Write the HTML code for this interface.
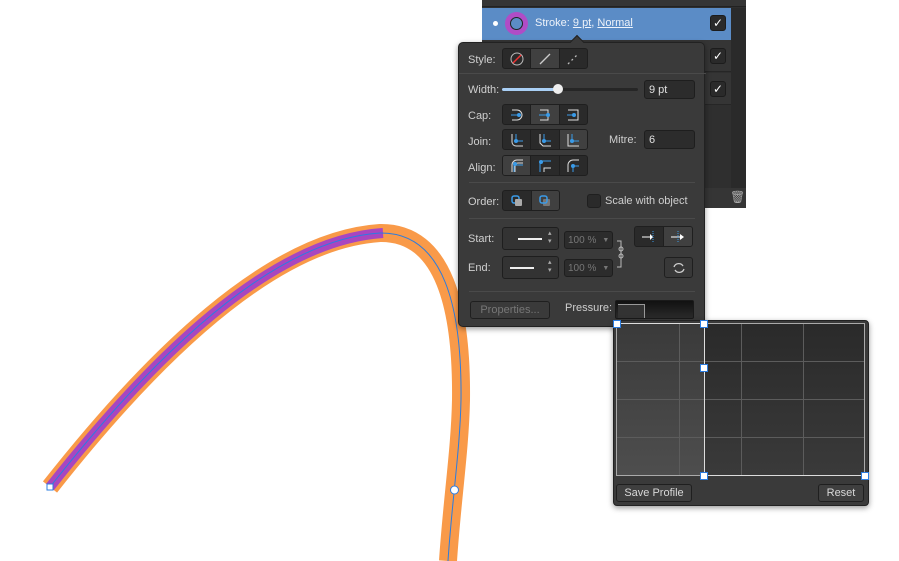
<!DOCTYPE html>
<html><head><meta charset="utf-8"><style>
*{box-sizing:border-box;margin:0;padding:0}
body{width:899px;height:561px;background:#fff;position:relative;overflow:hidden;font-family:"Liberation Sans",sans-serif;font-size:11px;color:#d8d8d8}
.abs{position:absolute}
.lbl{position:absolute;color:#cfcfcf;font-size:11px;white-space:nowrap}
.seg{position:absolute;border:1px solid #1f1f1f;border-radius:3px;background:#2a2a2a;display:flex;overflow:hidden}
.seg div{flex:1;border-right:1px solid #1f1f1f;display:flex;align-items:center;justify-content:center}
.seg div:last-child{border-right:none}
.seg .on{background:#404040}
.fld{position:absolute;background:#2c2c2c;border:1px solid #1e1e1e;border-radius:3px;color:#e0e0e0;font-size:11px;padding:0 4px;display:flex;align-items:center;white-space:nowrap}
.sep{position:absolute;left:10px;width:226px;height:1px;background:#222;border-bottom:1px solid #4a4a4a}
.btn{position:absolute;border:1px solid #1f1f1f;border-radius:3px;background:#3f3f3f;color:#d8d8d8;font-size:11px;text-align:center;white-space:nowrap}
.h{position:absolute;width:8px;height:8px;background:#fff;border:1px solid #2b7ce0}
</style></head><body>

<svg class="abs" style="left:0;top:0" width="899" height="561">
<path d="M50,487 C150,360 270,240 380,233 C445,232 462,310 461,400 C460,450 452,500 448,561" fill="none" stroke="#f99a49" stroke-width="18"/>
<path d="M50,487 C150,360 270,240 383,233" fill="none" stroke="#a846c0" stroke-width="10"/>
<path d="M50,487 C150,360 270,240 380,233 C445,232 462,310 461,400 C460,450 452,500 448,561" fill="none" stroke="#2b7ce0" stroke-width="1"/>
<rect x="47" y="484" width="6" height="6" fill="#fff" stroke="#2b7ce0"/>
<circle cx="454.5" cy="490" r="4" fill="#fff" stroke="#2b7ce0"/>
</svg>

<div class="abs" style="left:482px;top:0;width:264px;height:208px;background:#2f2f2f"></div>
<div class="abs" style="left:482px;top:0;width:264px;height:7px;background:#353535;border-bottom:1px solid #222"></div>
<div class="abs" style="left:482px;top:8px;width:249px;height:32px;background:#5b8cc6"></div>
<div class="abs" style="left:493px;top:21px;width:5px;height:5px;border-radius:50%;background:#fff"></div>
<div class="abs" style="left:505px;top:12px;width:23px;height:23px;border-radius:50%;border:5px solid #b04cc6;background:#5b8cc6"><div style="width:13px;height:13px;border-radius:50%;border:1px solid #222"></div></div>
<div class="abs" style="left:535px;top:17px;color:#eef3fa;font-size:11px">Stroke: <u>9 pt</u>, <u>Normal</u></div>
<div class="abs" style="left:482px;top:40px;width:264px;height:32px;background:#353535;border-bottom:1px solid #262626"></div>
<div class="abs" style="left:482px;top:73px;width:264px;height:32px;background:#353535;border-bottom:1px solid #262626"></div>
<div class="abs" style="left:731px;top:8px;width:15px;height:200px;background:#2a2a2a"></div>
<div class="abs" style="left:710px;top:15px;width:16px;height:16px;border-radius:3px;background:#2a2a2a;border:1px solid #1c1c1c;color:#fff;font-size:12px;text-align:center;line-height:14px">✓</div>
<div class="abs" style="left:710px;top:48px;width:16px;height:16px;border-radius:3px;background:#2a2a2a;border:1px solid #1c1c1c;color:#fff;font-size:12px;text-align:center;line-height:14px">✓</div>
<div class="abs" style="left:710px;top:81px;width:16px;height:16px;border-radius:3px;background:#2a2a2a;border:1px solid #1c1c1c;color:#fff;font-size:12px;text-align:center;line-height:14px">✓</div>
<div class="abs" style="left:705px;top:188px;width:41px;height:20px;background:#353535"></div>
<div class="abs" style="left:730px;top:190px;color:#aaa;font-size:12px">🗑</div>

<div class="abs" style="left:458px;top:42px;width:247px;height:285px;background:#3a3a3a;border:1px solid #222;border-radius:5px;box-shadow:0 2px 6px rgba(0,0,0,.4)">
<div class="abs" style="left:113px;top:-6px;width:10px;height:10px;background:#3a3a3a;transform:rotate(45deg);border-left:1px solid #222;border-top:1px solid #222"></div>
<div class="lbl" style="left:9px;top:11px">Style:</div>
<div class="seg" style="left:43px;top:5px;width:86px;height:21px">
<div><svg width="14" height="14"><circle cx="7" cy="7" r="6" fill="none" stroke="#bbb"/><line x1="3" y1="11" x2="11" y2="3" stroke="#e33" stroke-width="1.5"/></svg></div>
<div class="on"><svg width="14" height="14"><line x1="2" y1="12" x2="12" y2="2" stroke="#ccc" stroke-width="1.3"/></svg></div>
<div><svg width="14" height="14"><line x1="2" y1="12" x2="12" y2="2" stroke="#bbb" stroke-width="1.3" stroke-dasharray="2 3"/></svg></div>
</div>
<div class="sep" style="top:30px;left:0;width:247px"></div>
<div class="lbl" style="left:9px;top:41px">Width:</div>
<div class="abs" style="left:43px;top:45px;width:136px;height:3px;background:#262626;border-radius:2px"></div>
<div class="abs" style="left:43px;top:45px;width:56px;height:3px;background:#a9cff5;border-radius:2px"></div>
<div class="abs" style="left:94px;top:41px;width:10px;height:10px;border-radius:50%;background:#eee"></div>
<div class="fld" style="left:185px;top:37px;width:51px;height:19px">9 pt</div>
<div class="lbl" style="left:9px;top:67px">Cap:</div>
<div class="seg" style="left:43px;top:61px;width:86px;height:21px">
<div><svg width="14" height="12"><path d="M2,1H7A5,5 0 0 1 7,11H2" fill="none" stroke="#ddd"/><line x1="1" y1="6" x2="9" y2="6" stroke="#3a9be8"/><circle cx="9" cy="6" r="2" fill="#3a9be8"/></svg></div>
<div class="on"><svg width="14" height="12"><path d="M2,1H10V11H2" fill="none" stroke="#ddd"/><line x1="1" y1="6" x2="10" y2="6" stroke="#3a9be8"/><circle cx="10" cy="6" r="2" fill="#3a9be8"/></svg></div>
<div><svg width="14" height="12"><path d="M2,1H12V11H2" fill="none" stroke="#ddd"/><line x1="1" y1="6" x2="8" y2="6" stroke="#3a9be8"/><circle cx="8" cy="6" r="2" fill="#3a9be8"/></svg></div>
</div>
<div class="lbl" style="left:9px;top:93px">Join:</div>
<div class="seg" style="left:43px;top:86px;width:86px;height:21px">
<div><svg width="14" height="14"><path d="M2,1V9A4,4 0 0 0 6,13H13" fill="none" stroke="#ddd"/><path d="M6,1V8H13" fill="none" stroke="#3a9be8"/><circle cx="6" cy="8" r="2" fill="#3a9be8"/></svg></div>
<div><svg width="14" height="14"><path d="M2,1V10L5,13H13" fill="none" stroke="#ddd"/><path d="M6,1V8H13" fill="none" stroke="#3a9be8"/><circle cx="6" cy="8" r="2" fill="#3a9be8"/></svg></div>
<div class="on"><svg width="14" height="14"><path d="M2,1V13H13" fill="none" stroke="#ddd"/><path d="M6,1V8H13" fill="none" stroke="#3a9be8"/><circle cx="6" cy="8" r="2" fill="#3a9be8"/></svg></div>
</div>
<div class="lbl" style="left:150px;top:91px">Mitre:</div>
<div class="fld" style="left:185px;top:87px;width:51px;height:19px">6</div>
<div class="lbl" style="left:9px;top:119px">Align:</div>
<div class="seg" style="left:43px;top:112px;width:86px;height:21px">
<div class="on"><svg width="14" height="14"><path d="M2,13V6A5,5 0 0 1 7,1H13M5,13V7A3,3 0 0 1 8,4H13" fill="none" stroke="#ddd"/><path d="M4,13V6H13" fill="none" stroke="#3a9be8"/><circle cx="5" cy="5" r="2" fill="#3a9be8"/></svg></div>
<div><svg width="14" height="14"><path d="M6,13V9H13" fill="none" stroke="#ddd"/><path d="M2,13V2H13" fill="none" stroke="#3a9be8"/><circle cx="3" cy="3" r="2" fill="#3a9be8"/></svg></div>
<div><svg width="14" height="14"><path d="M2,13V6A5,5 0 0 1 7,1H13" fill="none" stroke="#ddd"/><path d="M7,13V7H13" fill="none" stroke="#3a9be8"/><circle cx="7" cy="7" r="2" fill="#3a9be8"/></svg></div>
</div>
<div class="sep" style="top:139px"></div>
<div class="lbl" style="left:9px;top:153px">Order:</div>
<div class="seg" style="left:43px;top:147px;width:58px;height:21px">
<div><svg width="14" height="14"><rect x="2" y="2" width="7" height="7" rx="2" fill="none" stroke="#3a9be8" stroke-width="1.5"/><rect x="5" y="5" width="7" height="7" rx="1" fill="#aaa"/></svg></div>
<div class="on"><svg width="14" height="14"><rect x="5" y="5" width="7" height="7" rx="1" fill="#777"/><rect x="2" y="2" width="7" height="7" rx="2" fill="none" stroke="#3a9be8" stroke-width="1.5"/></svg></div>
</div>
<div class="abs" style="left:128px;top:151px;width:14px;height:14px;border-radius:3px;background:#2a2a2a;border:1px solid #1f1f1f"></div>
<div class="lbl" style="left:146px;top:152px">Scale with object</div>
<div class="sep" style="top:175px"></div>
<div class="lbl" style="left:9px;top:190px">Start:</div>
<div class="fld" style="left:43px;top:184px;width:57px;height:23px;background:#333"><div style="position:absolute;left:15px;top:10px;width:24px;height:2px;background:#eee"></div><div style="position:absolute;left:45px;top:2px;color:#aaa;font-size:7px;line-height:8px">▴<br>▾</div></div>
<div class="fld" style="left:105px;top:188px;width:49px;height:18px;color:#777;font-size:10px;padding:0 3px">100 %<span style="font-size:7px;margin-left:6px">▼</span></div>
<div class="lbl" style="left:9px;top:219px">End:</div>
<div class="fld" style="left:43px;top:213px;width:57px;height:23px;background:#333"><div style="position:absolute;left:7px;top:10px;width:24px;height:2px;background:#eee"></div><div style="position:absolute;left:45px;top:2px;color:#aaa;font-size:7px;line-height:8px">▴<br>▾</div></div>
<div class="fld" style="left:105px;top:216px;width:49px;height:18px;color:#777;font-size:10px;padding:0 3px">100 %<span style="font-size:7px;margin-left:6px">▼</span></div>
<svg class="abs" style="left:157px;top:197px" width="12" height="28"><path d="M1,1H5V27H1" fill="none" stroke="#bbb"/><circle cx="5" cy="9" r="2" fill="none" stroke="#bbb"/><circle cx="5" cy="16" r="2" fill="none" stroke="#bbb"/></svg>
<div class="seg" style="left:175px;top:183px;width:59px;height:21px">
<div style="background:#2a2a2a"><svg width="16" height="12"><line x1="1" y1="6" x2="11" y2="6" stroke="#fff"/><path d="M9,3L12,6L9,9Z" fill="#fff"/><line x1="12" y1="0" x2="12" y2="12" stroke="#3a9be8" stroke-dasharray="1 1"/></svg></div>
<div class="on"><svg width="16" height="12"><line x1="1" y1="6" x2="13" y2="6" stroke="#fff"/><path d="M10,3L14,6L10,9Z" fill="#fff"/><line x1="8" y1="0" x2="8" y2="12" stroke="#3a9be8" stroke-dasharray="1 1"/></svg></div>
</div>
<div class="btn" style="left:205px;top:214px;width:29px;height:21px;background:#383838"><svg width="14" height="14" style="margin-top:3px"><path d="M11,5A5,5 0 0 0 2,6M3,9A5,5 0 0 0 12,8" fill="none" stroke="#ccc" stroke-width="1.3"/></svg></div>
<div class="sep" style="top:248px"></div>
<div class="btn" style="left:11px;top:258px;width:80px;height:18px;color:#777;line-height:16px;background:#3a3a3a">Properties...</div>
<div class="lbl" style="left:106px;top:259px">Pressure:</div>
<div class="abs" style="left:156px;top:257px;width:79px;height:19px;background:linear-gradient(#111,#2a2a2a);border:1px solid #1a1a1a;border-radius:2px"><div style="position:absolute;left:2px;top:3px;width:27px;height:14px;border-top:1px solid #999;border-right:1px solid #999;background:#333"></div></div>
</div>

<div class="abs" style="left:613px;top:320px;width:256px;height:186px;background:#3a3a3a;border:1px solid #222;border-radius:4px;box-shadow:0 2px 6px rgba(0,0,0,.4)"></div>
<div class="abs" style="left:617px;top:324px;width:88px;height:152px;background:linear-gradient(#3a3a3a,#4e4e4e)"></div>
<div class="abs" style="left:705px;top:324px;width:160px;height:152px;background:linear-gradient(#2a2a2a,#3a3a3a)"></div>
<svg class="abs" style="left:0;top:0" width="899" height="561">
<g stroke="#5c5c5c" stroke-width="1"><line x1="679.5" y1="324" x2="679.5" y2="476"/><line x1="741.5" y1="324" x2="741.5" y2="476"/><line x1="803.5" y1="324" x2="803.5" y2="476"/>
<line x1="617" y1="361.5" x2="865" y2="361.5"/><line x1="617" y1="399.5" x2="865" y2="399.5"/><line x1="617" y1="437.5" x2="865" y2="437.5"/></g>
<rect x="616.5" y="323.5" width="248" height="152" fill="none" stroke="#aaa"/>
<path d="M617,323.5H704.5V475.5H865" fill="none" stroke="#ddd"/>
</svg>
<div class="h" style="left:613px;top:320px"></div>
<div class="h" style="left:700px;top:320px"></div>
<div class="h" style="left:700px;top:364px"></div>
<div class="h" style="left:700px;top:472px"></div>
<div class="h" style="left:861px;top:472px"></div>
<div class="btn" style="left:616px;top:484px;width:76px;height:18px;line-height:16px">Save Profile</div>
<div class="btn" style="left:818px;top:484px;width:46px;height:18px;line-height:16px">Reset</div>
</body></html>
